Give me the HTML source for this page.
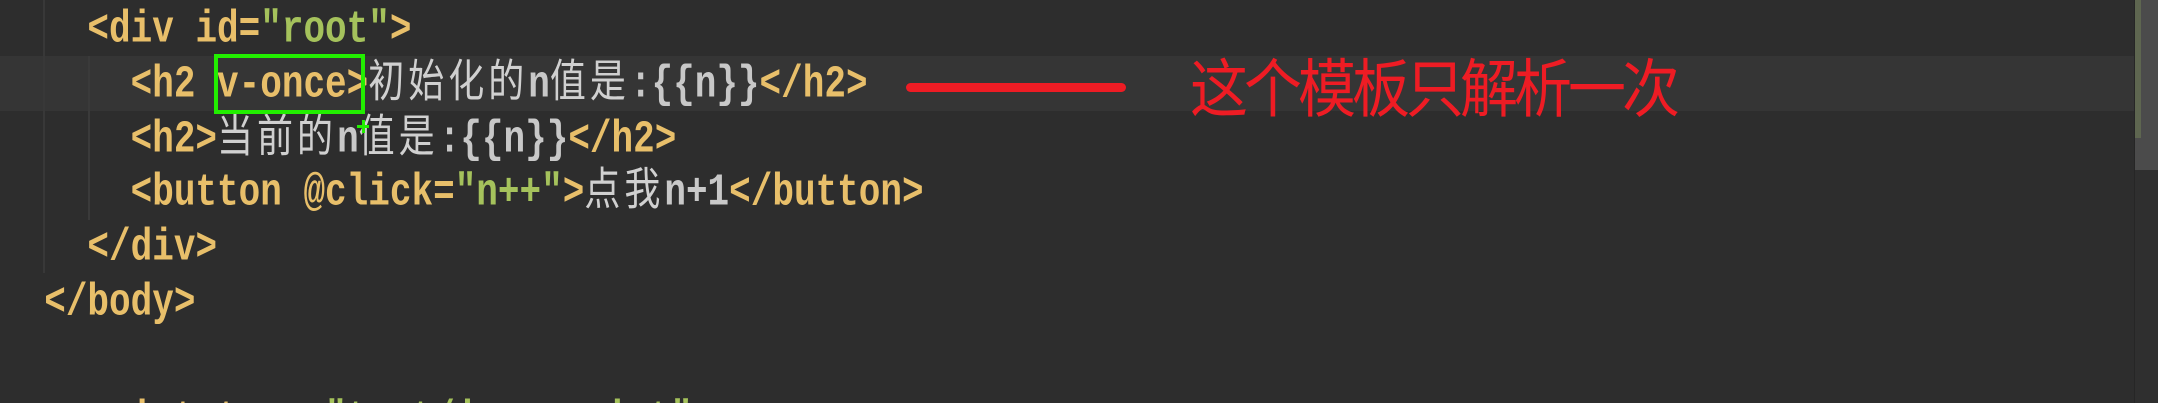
<!DOCTYPE html>
<html><head><meta charset="utf-8"><style>
html,body{margin:0;padding:0;width:2158px;height:403px;overflow:hidden;}
body{background:#2d2d2d;position:relative;font-family:"Liberation Mono","Noto Sans CJK SC",monospace;font-size:36px;font-weight:bold;}
.l{position:absolute;left:1px;height:55px;line-height:55px;white-space:pre;color:#c8c8c8;transform:scaleY(1.25);transform-origin:0 50%;}
.t{color:#e8bf6a}
.s{color:#a5c25c}
.c{letter-spacing:4px;font-weight:normal;color:#d0d0d0}
</style></head><body>
<div style="position:absolute;left:0;top:56px;width:2134px;height:55px;background:#353535"></div>
<div style="position:absolute;left:43px;top:0;width:2px;height:273px;background:#383838"></div>
<div style="position:absolute;left:88px;top:56px;width:2px;height:164px;background:#3a3a3a"></div>
<div class="l" style="top:2px">    <span class="t">&lt;div id=</span><span class="s">"root"</span><span class="t">&gt;</span></div>
<div class="l" style="top:57px">      <span class="t">&lt;h2 v-once&gt;</span><span class="c">初始化的</span>n<span class="c">值是</span>:{{n}}<span class="t">&lt;/h2&gt;</span></div>
<div class="l" style="top:112px">      <span class="t">&lt;h2&gt;</span><span class="c">当前的</span>n<span class="c">值是</span>:{{n}}<span class="t">&lt;/h2&gt;</span></div>
<div class="l" style="top:165px">      <span class="t">&lt;button @click=</span><span class="s">"n++"</span><span class="t">&gt;</span><span class="c">点我</span>n+1<span class="t">&lt;/button&gt;</span></div>
<div class="l" style="top:220px">    <span class="t">&lt;/div&gt;</span></div>
<div class="l" style="top:275px">  <span class="t">&lt;/body&gt;</span></div>
<div style="position:absolute;left:0;top:370px;width:2134px;height:33px;overflow:hidden">
<div class="l" style="top:22px">  <span class="t">&lt;script type=</span><span class="s">"text/javascript"</span><span class="t">&gt;</span></div>
</div>
<div style="position:absolute;left:214px;top:54px;width:143px;height:52px;border:4px solid #22ee00"></div>
<div style="position:absolute;left:357px;top:125px;width:12px;height:3px;background:#22ee00"></div>
<div style="position:absolute;left:362px;top:120px;width:3px;height:13px;background:#22ee00"></div>
<div style="position:absolute;left:906px;top:83px;width:220px;height:9px;background:#ee1c24;border-radius:5px"></div>
<div style="position:absolute;left:1190px;top:52px;height:64px;line-height:64px;font-family:'Noto Sans CJK SC',sans-serif;font-weight:normal;font-size:58px;letter-spacing:-4px;color:#ee1c24;white-space:nowrap;transform:scaleY(1.1);transform-origin:0 50%">这个模板只解析一次</div>
<div style="position:absolute;left:2134px;top:0;width:24px;height:403px;background:#2f2f2f;border-left:1px solid #262626"></div>
<div style="position:absolute;left:2135px;top:0;width:23px;height:170px;background:#4b4b4b"></div>
<div style="position:absolute;left:2135px;top:0;width:6px;height:138px;background:#5e6650"></div>
</body></html>
